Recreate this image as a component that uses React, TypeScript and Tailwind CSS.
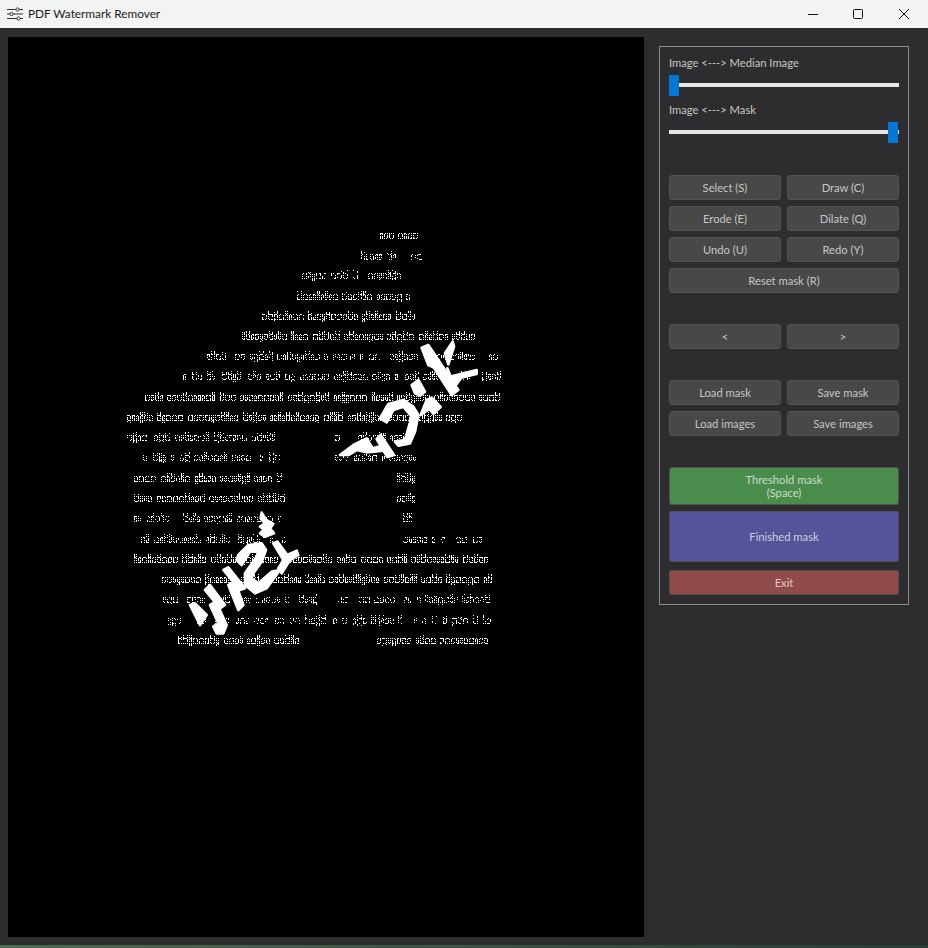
import React from "react";

type Seg = [number, number];
const LINES: { y: number; d: number; segs: Seg[] }[] = [
  { y: 235, d: 1, segs: [[380, 418]] },
  { y: 256, d: 0.7, segs: [[361, 418]] },
  { y: 275, d: 0.75, segs: [[302, 405]] },
  { y: 296, d: 0.9, segs: [[297, 411]] },
  { y: 316, d: 0.9, segs: [[262, 416]] },
  { y: 336, d: 0.95, segs: [[242, 472]] },
  { y: 356, d: 0.75, segs: [[207, 495]] },
  { y: 376, d: 0.75, segs: [[183, 498]] },
  { y: 397, d: 1, segs: [[145, 496]] },
  { y: 417, d: 1, segs: [[127, 458]] },
  { y: 437, d: 0.75, segs: [[127, 276], [335, 415]] },
  { y: 457, d: 0.75, segs: [[137, 281], [335, 414]] },
  { y: 478, d: 0.9, segs: [[134, 281], [397, 414]] },
  { y: 498, d: 0.9, segs: [[134, 281], [397, 414]] },
  { y: 518, d: 0.7, segs: [[134, 281], [397, 414]] },
  { y: 539, d: 0.75, segs: [[136, 285], [397, 484]] },
  { y: 559, d: 1, segs: [[134, 489]] },
  { y: 579, d: 0.95, segs: [[162, 489]] },
  { y: 599, d: 0.65, segs: [[163, 487]] },
  { y: 620, d: 0.65, segs: [[168, 488]] },
  { y: 640, d: 0.95, segs: [[178, 300], [377, 489]] },
];

function speckle() {
  let s = 987654;
  const r = () => {
    s = (s * 1664525 + 1013904223) >>> 0;
    return s / 4294967296;
  };
  const out: { x: number; y: number }[] = [];
  for (const line of LINES) {
    for (const [a, b] of line.segs) {
      let x = a;
      while (x < b) {
        const wordEnd = Math.min(b, x + 14 + Math.floor(r() * 40));
        while (x < wordEnd) {
          const w = 3 + Math.floor(r() * 3);
          const asc = r() > 0.72;
          const desc = r() > 0.9;
          const top = asc ? line.y - 5 : line.y - 2;
          const bot = desc ? line.y + 5 : line.y + 3;
          if (r() < line.d + 0.1) {
            for (let yy = top; yy <= bot; yy++) {
              for (let c = 0; c < w; c++) {
                const edge = c === 0 || c === w - 1;
                const cap = yy === line.y - 2 || yy === line.y + 3;
                if (!(edge || cap)) continue;
                if ((yy + c + x) % 2 === 1 && r() > 0.35) continue;
                if (r() < line.d) out.push({ x: x + c, y: yy });
              }
            }
          }
          x += w + 1;
        }
        x += 3 + Math.floor(r() * 2);
      }
    }
  }
  return out;
}

const DOTS = speckle();

function Btn({ children, className = "h-[25px]" }: { children: React.ReactNode; className?: string }) {
  return (
    <div
      className={`flex flex-col items-center justify-center rounded-[3px] border border-[#525254] bg-[#484848] text-center text-[11.2px] leading-[13px] text-[#c6c6c6] ${className}`}
    >
      {children}
    </div>
  );
}

function Slider({ label, at }: { label: string; at: "start" | "end" }) {
  return (
    <div>
      <div className="h-[14px] text-[11.2px] leading-[14px] text-[#c8c8c8]">{label}</div>
      <div className={`relative mt-[5px] flex h-[21px] items-center ${at === "end" ? "justify-end pr-px" : ""}`}>
        <div className="absolute inset-x-0 top-[8px] h-[4px] bg-[#e6e6e6]" />
        <div className="relative h-[21px] w-[10px] bg-[#0078d7]" />
      </div>
    </div>
  );
}

export default function App() {
  return (
    <div
      className="relative flex h-[948px] w-[928px] flex-col overflow-hidden bg-[#2d2d2f]"
      style={{ fontFamily: 'Lato, "Noto Sans", "Liberation Sans", sans-serif' }}
    >
      <header className="flex h-[28px] shrink-0 items-center bg-[#f2f3f3] text-[#1a1a1a]">
        <svg width="18" height="14" viewBox="0 0 18 14" className="ml-[6px]" fill="none" stroke="#333" strokeWidth="1">
          <path d="M1 2.5h9M13 2.5h4M1 7h3M7 7h10M1 11.5h10M14 11.5h3" />
          <circle cx="11.5" cy="2.5" r="1.6" />
          <circle cx="5.5" cy="7" r="1.6" />
          <circle cx="12.5" cy="11.5" r="1.6" />
        </svg>
        <span className="ml-[4px] text-[11.8px]">PDF Watermark Remover</span>
        <div className="ml-auto flex items-center pr-[19px]">
          <svg width="10" height="10" viewBox="0 0 10 10" stroke="#111" fill="none">
            <path d="M0 5.5h10" />
          </svg>
          <svg width="10" height="10" viewBox="0 0 10 10" stroke="#111" fill="none" className="ml-[35px]">
            <rect x="0.5" y="0.5" width="9" height="9" rx="1" />
          </svg>
          <svg width="10" height="10" viewBox="0 0 10 10" stroke="#111" fill="none" className="ml-[36px]">
            <path d="M0 0l10 10M10 0L0 10" />
          </svg>
        </div>
      </header>

      <main className="flex flex-1 items-start pl-[8px] pt-[9px]">
        <svg width="636" height="900" viewBox="8 37 636 900" className="shrink-0 bg-black">
          <g fill="#fff" shapeRendering="crispEdges">
            {DOTS.map((d, i) => (
              <rect key={i} x={d.x} y={d.y} width={1} height={1} />
            ))}
          </g>
          <g fill="#fff" stroke="#fff" strokeWidth="8" strokeLinejoin="round" transform="translate(330 335) scale(0.3333)">
            <path d="M275 38L295 30L385 165L365 180L312 98L295 90Z" />
            <path d="M345 55L368 20L372 35L355 88Z" />
            <path d="M352 100L362 125L440 105L440 117L395 127L376 152L362 128Z" />
            <path d="M245 150L265 135L285 170L270 182L255 175Z" />
            <path d="M272 240L290 195L305 188L332 216L310 236L298 222Z" />
            <path d="M150 250L175 207L220 195L250 215L265 240L255 290L240 325L205 332L195 320L225 315L235 280L245 245L220 215L190 225L170 262Z" />
            <path d="M30 360L70 330L110 310L128 340L165 330L180 345L110 352L80 345L55 360Z" />
            <path d="M140 312L152 300L192 360L172 366Z" />
          </g>
          <g fill="#fff" stroke="#fff" strokeWidth="8" strokeLinejoin="round" transform="translate(190 510) scale(0.3333)">
            <path d="M210 50L225 40L212 25L215 8L228 30L250 42L240 55L252 70L225 80L210 70L222 58Z" />
            <path d="M250 100L262 95L292 135L320 122L325 135L300 150L275 190L265 175L280 150Z" />
            <path d="M145 135L175 105L215 100L228 120L215 155L190 190L185 205L205 220L245 185L270 180L230 235L195 250L165 225L165 190L200 140L205 125L180 125L155 165L140 150Z" />
            <path d="M45 240L60 225L105 285L90 295Z" />
            <path d="M100 180L115 172L165 235L150 240Z" />
            <path d="M115 225L135 215L160 285L145 300Z" />
            <path d="M60 285L78 275L110 345L100 370L80 370L70 350L85 340Z" />
            <path d="M0 285L15 280L50 315L30 345Z" />
          </g>
        </svg>

        <aside className="ml-[15px] mt-[9px] flex w-[250px] flex-col border border-[#8c8c90] p-[9px]">
          <Slider label="Image <---> Median Image" at="start" />
          <div className="h-[7px]" />
          <Slider label="Image <---> Mask" at="end" />

          <div className="mt-[32px] grid grid-cols-2 gap-[6px]">
            <Btn>Select (S)</Btn>
            <Btn>Draw (C)</Btn>
            <Btn>Erode (E)</Btn>
            <Btn>Dilate (Q)</Btn>
            <Btn>Undo (U)</Btn>
            <Btn>Redo (Y)</Btn>
            <Btn className="col-span-2 h-[25px]">Reset mask (R)</Btn>
          </div>

          <div className="mt-[31px] grid grid-cols-2 gap-[6px]">
            <Btn>&lt;</Btn>
            <Btn>&gt;</Btn>
          </div>

          <div className="mt-[31px] grid grid-cols-2 gap-[6px]">
            <Btn>Load mask</Btn>
            <Btn>Save mask</Btn>
            <Btn>Load images</Btn>
            <Btn>Save images</Btn>
          </div>

          <Btn className="mt-[31px] h-[38px] !bg-[#4a8c4c] !text-[#c9dcc9]">
            <span>Threshold mask</span>
            <span>(Space)</span>
          </Btn>
          <Btn className="mt-[6px] h-[51px] !bg-[#54549a] !text-[#cdcde0]">Finished mask</Btn>
          <Btn className="mt-[8px] h-[25px] !bg-[#924b4b] !text-[#e0c8c8]">Exit</Btn>
        </aside>
      </main>
      <div className="h-[3px] shrink-0 bg-gradient-to-r from-[#4d6b52] to-[#2a3a35]" />
    </div>
  );
}
